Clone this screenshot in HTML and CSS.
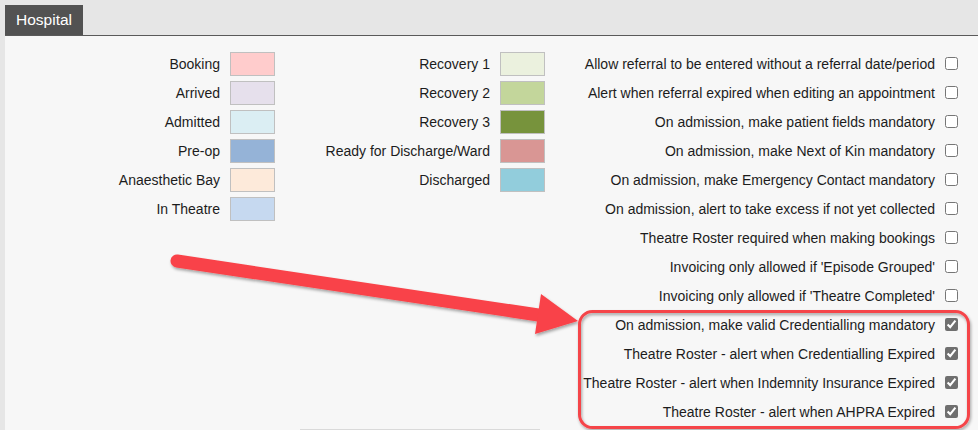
FILE: index.html
```html
<!DOCTYPE html>
<html lang="en">
<head>
    <meta charset="UTF-8">
    <meta name="viewport" content="width=device-width, initial-scale=1.0">
    <title>Hospital Settings</title>
    <link rel="stylesheet" href="styles.css">
</head>
<body>
    <div class="page">
        <div class="tabs">
            <span class="tab">Hospital</span>
        </div>

        <div class="panel">
            <div class="col col-colours">
                <div class="row"><span>Booking</span><span class="swatch booking"></span></div>
                <div class="row"><span>Arrived</span><span class="swatch arrived"></span></div>
                <div class="row"><span>Admitted</span><span class="swatch admitted"></span></div>
                <div class="row"><span>Pre-op</span><span class="swatch preop"></span></div>
                <div class="row"><span>Anaesthetic Bay</span><span class="swatch anaesthetic"></span></div>
                <div class="row"><span>In Theatre</span><span class="swatch theatre"></span></div>
            </div>

            <div class="col col-colours">
                <div class="row"><span>Recovery 1</span><span class="swatch recovery1"></span></div>
                <div class="row"><span>Recovery 2</span><span class="swatch recovery2"></span></div>
                <div class="row"><span>Recovery 3</span><span class="swatch recovery3"></span></div>
                <div class="row"><span>Ready for Discharge/Ward</span><span class="swatch ready"></span></div>
                <div class="row"><span>Discharged</span><span class="swatch discharged"></span></div>
            </div>

            <div class="col col-options">
                <label class="row">Allow referral to be entered without a referral date/period <input type="checkbox"></label>
                <label class="row">Alert when referral expired when editing an appointment <input type="checkbox"></label>
                <label class="row">On admission, make patient fields mandatory <input type="checkbox"></label>
                <label class="row">On admission, make Next of Kin mandatory <input type="checkbox"></label>
                <label class="row">On admission, make Emergency Contact mandatory <input type="checkbox"></label>
                <label class="row">On admission, alert to take excess if not yet collected <input type="checkbox"></label>
                <label class="row">Theatre Roster required when making bookings <input type="checkbox"></label>
                <label class="row">Invoicing only allowed if 'Episode Grouped' <input type="checkbox"></label>
                <label class="row">Invoicing only allowed if 'Theatre Completed' <input type="checkbox"></label>
                <label class="row">On admission, make valid Credentialling mandatory <input type="checkbox" checked></label>
                <label class="row">Theatre Roster - alert when Credentialling Expired <input type="checkbox" checked></label>
                <label class="row">Theatre Roster - alert when Indemnity Insurance Expired <input type="checkbox" checked></label>
                <label class="row">Theatre Roster - alert when AHPRA Expired <input type="checkbox" checked></label>
            </div>
        </div>

        <div class="footer-bar"></div>

        <!-- annotation drawn over the screenshot -->
        <svg class="annotation" width="978" height="430" viewBox="0 0 978 430">
            <defs>
                <filter id="shadow" x="-10%" y="-10%" width="120%" height="130%">
                    <feDropShadow dx="1" dy="2" stdDeviation="1.6" flood-color="#000" flood-opacity="0.35"/>
                </filter>
            </defs>
            <g filter="url(#shadow)">
                <line x1="177" y1="261" x2="545" y2="316" stroke="#f94348" stroke-width="13" stroke-linecap="round"/>
                <polygon points="541,294 578,321 535,334" fill="#f94348"/>
                <rect x="579.5" y="311.5" width="389" height="116" rx="13" fill="none" stroke="#f5444a" stroke-width="3"/>
            </g>
        </svg>
    </div>
</body>
</html>
```

FILE: styles.css
```css
body {
    margin: 0;
    background-color: #e6e6e6;
    font-family: "Liberation Sans", Arial, sans-serif;
    font-size: 14px;
    color: #1c1c1c;
    overflow: hidden;
}
.page {
    position: relative;
    margin-left: 5px;
    height: 430px;
    background-color: #f7f7f7;
}
.tabs {
    background-color: #e6e6e6;
    padding-top: 5px;
    border-bottom: 1px solid #5a5a5a;
    height: 30px;
}
.tab {
    display: inline-block;
    height: 30px;
    line-height: 30px;
    padding: 0 11px;
    background-color: #525252;
    color: #fff;
    font-size: 15.5px;
}
.panel {
    display: flex;
    padding-top: 13px;
}
.col {
    display: flex;
    flex-direction: column;
}
.col-colours {
    width: 270px;
}
.col-options {
    flex: 1;
    padding-right: 20px;
}
.row {
    display: flex;
    align-items: center;
    justify-content: flex-end;
    gap: 10px;
    height: 29px;
    white-space: nowrap;
}
.swatch {
    width: 43px;
    height: 22px;
    border: 1px solid #c0c0c0;
}
.booking { background-color: #ffcccc; }
.arrived { background-color: #e6e0ec; }
.admitted { background-color: #dbeef3; }
.preop { background-color: #95b3d7; }
.anaesthetic { background-color: #fdeada; }
.theatre { background-color: #c6d9f0; }
.recovery1 { background-color: #ebf1de; }
.recovery2 { background-color: #c3d69b; }
.recovery3 { background-color: #77933c; }
.ready { background-color: #d99694; }
.discharged { background-color: #92cddc; }

.row input {
    width: 13px;
    height: 13px;
    margin: 0;
    accent-color: #6f6f6f;
}
.footer-bar {
    margin: 3px 0 0 295px;
    width: 240px;
    border-top: 1px solid #dadada;
}
.annotation {
    position: absolute;
    left: -5px;
    top: 0;
    pointer-events: none;
}
```
